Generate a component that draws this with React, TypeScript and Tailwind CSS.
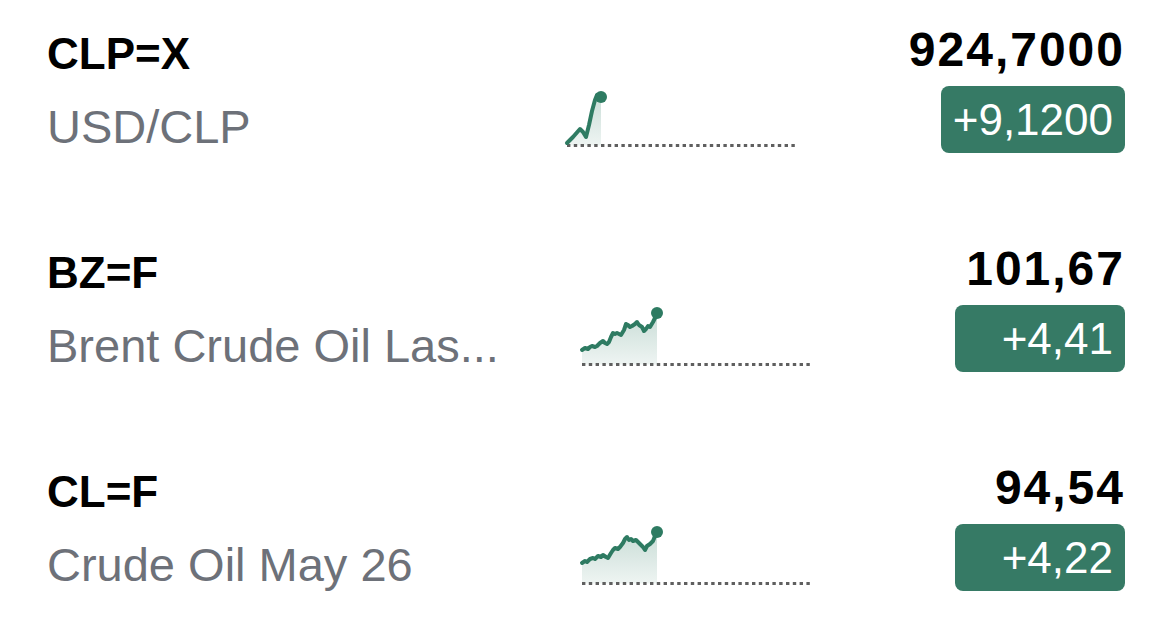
import React from "react";

type Row = {
  symbol: string;
  name: string;
  price: string;
  change: string;
  points: [number, number][];
  sparkClass: string;
};

const rows: Row[] = [
  {
    symbol: "CLP=X",
    name: "USD/CLP",
    price: "924,7000",
    change: "+9,1200",
    points: [
      [0, 56],
      [6, 50],
      [13, 42],
      [16, 45],
      [19, 50],
      [22, 38],
      [25, 24],
      [28, 13],
      [30, 8],
      [34, 10],
    ],
    sparkClass: "mr-[112px]",
  },
  {
    symbol: "BZ=F",
    name: "Brent Crude Oil Las...",
    price: "101,67",
    change: "+4,41",
    points: [
      [0, 44],
      [3, 42],
      [6, 43],
      [8, 41],
      [10, 40],
      [13, 41],
      [15, 40],
      [18, 37],
      [21, 35],
      [23, 37],
      [25, 38],
      [27, 36],
      [29, 31],
      [31, 27],
      [33, 28],
      [35, 27],
      [37, 28],
      [39, 29],
      [42, 24],
      [44, 18],
      [46, 19],
      [48, 21],
      [50, 20],
      [53, 18],
      [55, 16],
      [57, 19],
      [60, 21],
      [62, 25],
      [64, 23],
      [66, 20],
      [68, 21],
      [71, 16],
      [73, 12],
      [75, 7],
    ],
    sparkClass: "mr-[143px]",
  },
  {
    symbol: "CL=F",
    name: "Crude Oil May 26",
    price: "94,54",
    change: "+4,22",
    points: [
      [0, 38],
      [3, 36],
      [5, 37],
      [8, 34],
      [11, 33],
      [13, 34],
      [16, 31],
      [19, 32],
      [21, 30],
      [24, 32],
      [26, 33],
      [29, 28],
      [31, 25],
      [33, 23],
      [36, 24],
      [38, 22],
      [41, 18],
      [43, 14],
      [45, 12],
      [47, 15],
      [49, 14],
      [51, 16],
      [54, 15],
      [56, 17],
      [58, 19],
      [61, 22],
      [63, 25],
      [65, 21],
      [68, 19],
      [71, 16],
      [73, 11],
      [75, 7],
    ],
    sparkClass: "mr-[143px]",
  },
];

function Sparkline({ points, id }: { points: [number, number][]; id: string }) {
  const W = 230;
  const H = 60;
  const base = H - 1.5;
  const line = points.map((p, i) => `${i === 0 ? "M" : "L"}${p[0]},${p[1]}`).join(" ");
  const last = points[points.length - 1];
  const area = `${line} L${last[0]},${base} L${points[0][0]},${base} Z`;
  return (
    <svg width={W} height={H} viewBox={`0 0 ${W} ${H}`} className="block overflow-visible">
      <defs>
        <linearGradient id={id} x1="0" y1="0" x2="0" y2="1">
          <stop offset="0%" stopColor="#2f7b63" stopOpacity="0.26" />
          <stop offset="100%" stopColor="#2f7b63" stopOpacity="0.08" />
        </linearGradient>
      </defs>
      <path d={area} fill={`url(#${id})`} />
      <line
        x1="0"
        y1={base}
        x2={W}
        y2={base}
        stroke="#5f5f5f"
        strokeWidth="2.8"
        strokeDasharray="3.4 3.4"
      />
      <path
        d={line}
        fill="none"
        stroke="#2e7b62"
        strokeWidth="4"
        strokeLinejoin="round"
        strokeLinecap="round"
      />
      <circle cx={last[0]} cy={last[1]} r="6" fill="#2e7b62" />
    </svg>
  );
}

export default function App() {
  return (
    <div
      className="w-[1170px] h-[639px] bg-white overflow-hidden pl-[47px] pr-[45px] pt-[24px] flex flex-col gap-[90px]"
      style={{ fontFamily: '"Liberation Sans", Arial, sans-serif' }}
    >
      {rows.map((r, i) => (
        <div key={r.symbol} className="flex items-stretch">
          <div className="flex-1 min-w-0 flex flex-col">
            <div className="mt-[5px] text-[44px] leading-[50px] font-bold text-black whitespace-nowrap">
              {r.symbol}
            </div>
            <div className="mt-[22px] text-[47px] leading-[52px] text-[#6d7179] whitespace-nowrap overflow-hidden">
              {r.name}
            </div>
          </div>
          <div className={`self-end mb-[6px] shrink-0 ${r.sparkClass}`}>
            <Sparkline points={r.points} id={`g${i}`} />
          </div>
          <div className="shrink-0 flex flex-col items-end">
            <div className="text-[48px] leading-[52px] font-bold text-black tracking-[2px] whitespace-nowrap">
              {r.price}
            </div>
            <div className="mt-[10px] h-[67px] min-w-[170px] px-[12px] rounded-[8px] bg-[#367a65] flex items-center justify-end text-white text-[44px] leading-none whitespace-nowrap">
              {r.change}
            </div>
          </div>
        </div>
      ))}
    </div>
  );
}
